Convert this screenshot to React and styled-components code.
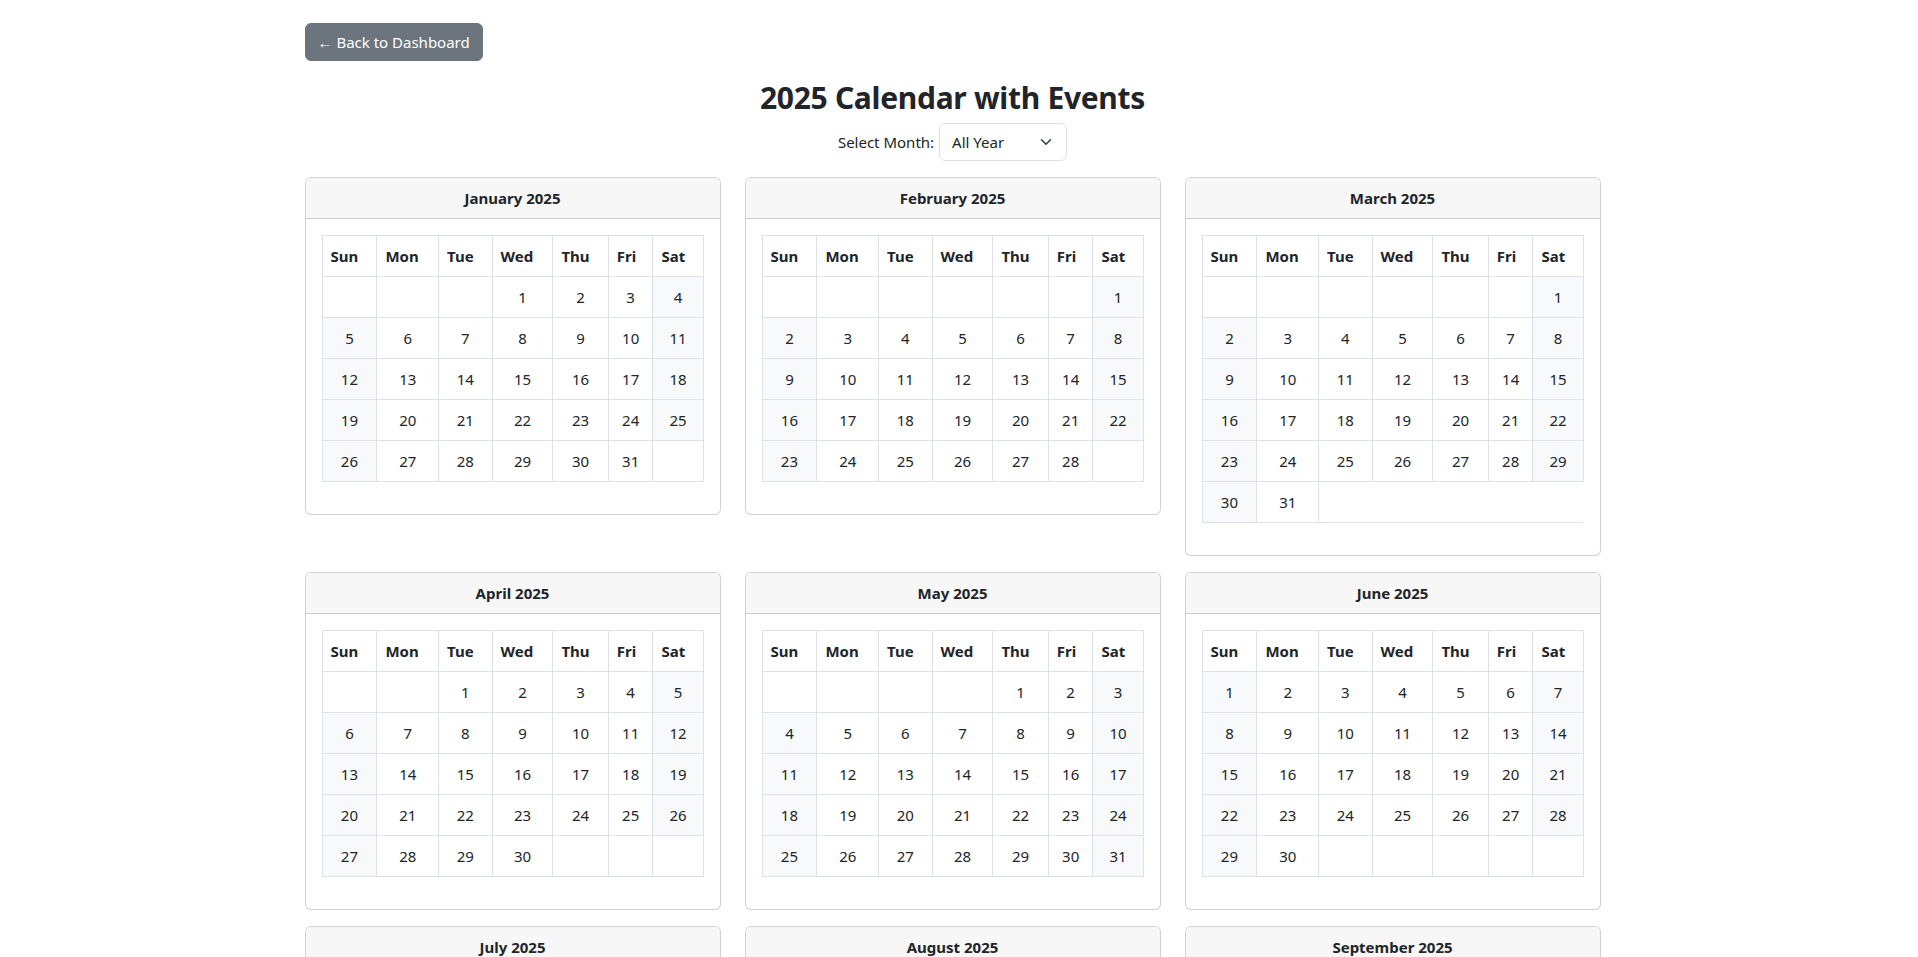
import React, { useState } from 'react'
import styled, { createGlobalStyle } from 'styled-components'

const GlobalStyle = createGlobalStyle`
    * { box-sizing: border-box; }
    body {
        margin: 0;
        padding-right: 13px;
        font-family: "Noto Sans", "Open Sans", sans-serif;
        font-size: 15px;
        line-height: 24px;
        color: #212529;
        background: #fff;
    }
`

const MONTHS = [
    'January', 'February', 'March', 'April', 'May', 'June',
    'July', 'August', 'September', 'October', 'November', 'December',
]
const DAYS = ['Sun', 'Mon', 'Tue', 'Wed', 'Thu', 'Fri', 'Sat']
const YEAR = 2025

// cells are padded up to five full weeks, longer months are left ragged
function buildWeeks(month) {
    const first = new Date(YEAR, month, 1).getDay()
    const count = new Date(YEAR, month + 1, 0).getDate()
    const cells = []
    for (let i = 0; i < first; i++) cells.push(null)
    for (let d = 1; d <= count; d++) cells.push(d)
    while (cells.length < 35) cells.push(null)
    const weeks = []
    for (let i = 0; i < cells.length; i += 7) weeks.push(cells.slice(i, i + 7))
    return weeks
}

const Page = styled.div`
    max-width: 1320px;
    min-height: 3770px;
    margin: 0 auto;
    padding: 23px 12px 24px;
`

const BackButton = styled.button`
    display: inline-block;
    font-family: inherit;
    font-size: 15px;
    line-height: 24px;
    padding: 6px 12px;
    color: #fff;
    background: #6c757d;
    border: 1px solid #6c757d;
    border-radius: 6px;
    cursor: pointer;
`

const Title = styled.h2`
    margin: 18px 0 6px;
    font-size: 30px;
    font-weight: 700;
    letter-spacing: -0.3px;
    line-height: 38px;
    text-align: center;
`

const PickerRow = styled.div`
    display: flex;
    justify-content: center;
    align-items: center;
    gap: 5px;
    margin-bottom: 16px;
`

const PickerLabel = styled.label`
    font-size: 15px;
`

const SelectWrap = styled.div`
    position: relative;
    display: inline-block;
    svg {
        position: absolute;
        right: 13px;
        top: 50%;
        transform: translateY(-50%);
        pointer-events: none;
    }
`

const Select = styled.select`
    appearance: none;
    font-family: inherit;
    font-size: 15px;
    line-height: 24px;
    height: 38px;
    color: #212529;
    padding: 6px 36px 6px 12px;
    background: #fff;
    border: 1px solid #dee2e6;
    border-radius: 6px;
`

const Grid = styled.div`
    display: grid;
    grid-template-columns: repeat(3, 1fr);
    column-gap: 24px;
    row-gap: 16px;
    align-items: start;
`

const Card = styled.div`
    border: 1px solid rgba(0, 0, 0, 0.175);
    border-radius: 6px;
    background: #fff;
    overflow: hidden;
`

const CardHeader = styled.div`
    padding: 8px 16px;
    background: #f7f7f7;
    border-bottom: 1px solid rgba(0, 0, 0, 0.175);
    text-align: center;
    font-weight: 700;
`

const CardBody = styled.div`
    padding: 16px;
`

const Table = styled.table`
    width: 100%;
    margin-bottom: 16px;
    border-collapse: collapse;
    tr {
        border-top: 1px solid #dee2e6;
        border-bottom: 1px solid #dee2e6;
    }
`

const Th = styled.th`
    padding: 8px;
    text-align: left;
    font-weight: 700;
    border-left: 1px solid #dee2e6;
    border-right: 1px solid #dee2e6;
`

const Td = styled.td`
    padding: 8px;
    height: 41px;
    text-align: center;
    background: ${p => (p.$weekend ? '#f8f9fa' : '#fff')};
    border-left: 1px solid #dee2e6;
    border-right: 1px solid #dee2e6;
`

function MonthCard({ month }) {
    const weeks = buildWeeks(month)
    return (
        <Card>
            <CardHeader>{MONTHS[month]} {YEAR}</CardHeader>
            <CardBody>
                <Table>
                    <thead>
                        <tr>
                            {DAYS.map(d => <Th key={d}>{d}</Th>)}
                        </tr>
                    </thead>
                    <tbody>
                        {weeks.map((week, w) => (
                            <tr key={w}>
                                {week.map((day, i) => (
                                    <Td key={i} $weekend={day !== null && (i === 0 || i === 6)}>
                                        {day}
                                    </Td>
                                ))}
                            </tr>
                        ))}
                    </tbody>
                </Table>
            </CardBody>
        </Card>
    )
}

export default function App() {
    const [selected, setSelected] = useState('all')
    const months = selected === 'all' ? MONTHS.map((_, i) => i) : [Number(selected)]
    return (
        <>
            <GlobalStyle />
            <Page>
                <BackButton>← Back to Dashboard</BackButton>
                <Title>2025 Calendar with Events</Title>
                <PickerRow>
                    <PickerLabel htmlFor="month">Select Month:</PickerLabel>
                    <SelectWrap>
                        <Select id="month" value={selected} onChange={e => setSelected(e.target.value)}>
                            <option value="all">All Year</option>
                            {MONTHS.map((m, i) => <option key={m} value={i}>{m}</option>)}
                        </Select>
                        <svg width="16" height="12" viewBox="0 0 16 16">
                            <path d="m2 5 6 6 6-6" fill="none" stroke="#343a40" strokeWidth="2" strokeLinecap="round" strokeLinejoin="round" />
                        </svg>
                    </SelectWrap>
                </PickerRow>
                <Grid>
                    {months.map(m => <MonthCard key={m} month={m} />)}
                </Grid>
            </Page>
        </>
    )
}
